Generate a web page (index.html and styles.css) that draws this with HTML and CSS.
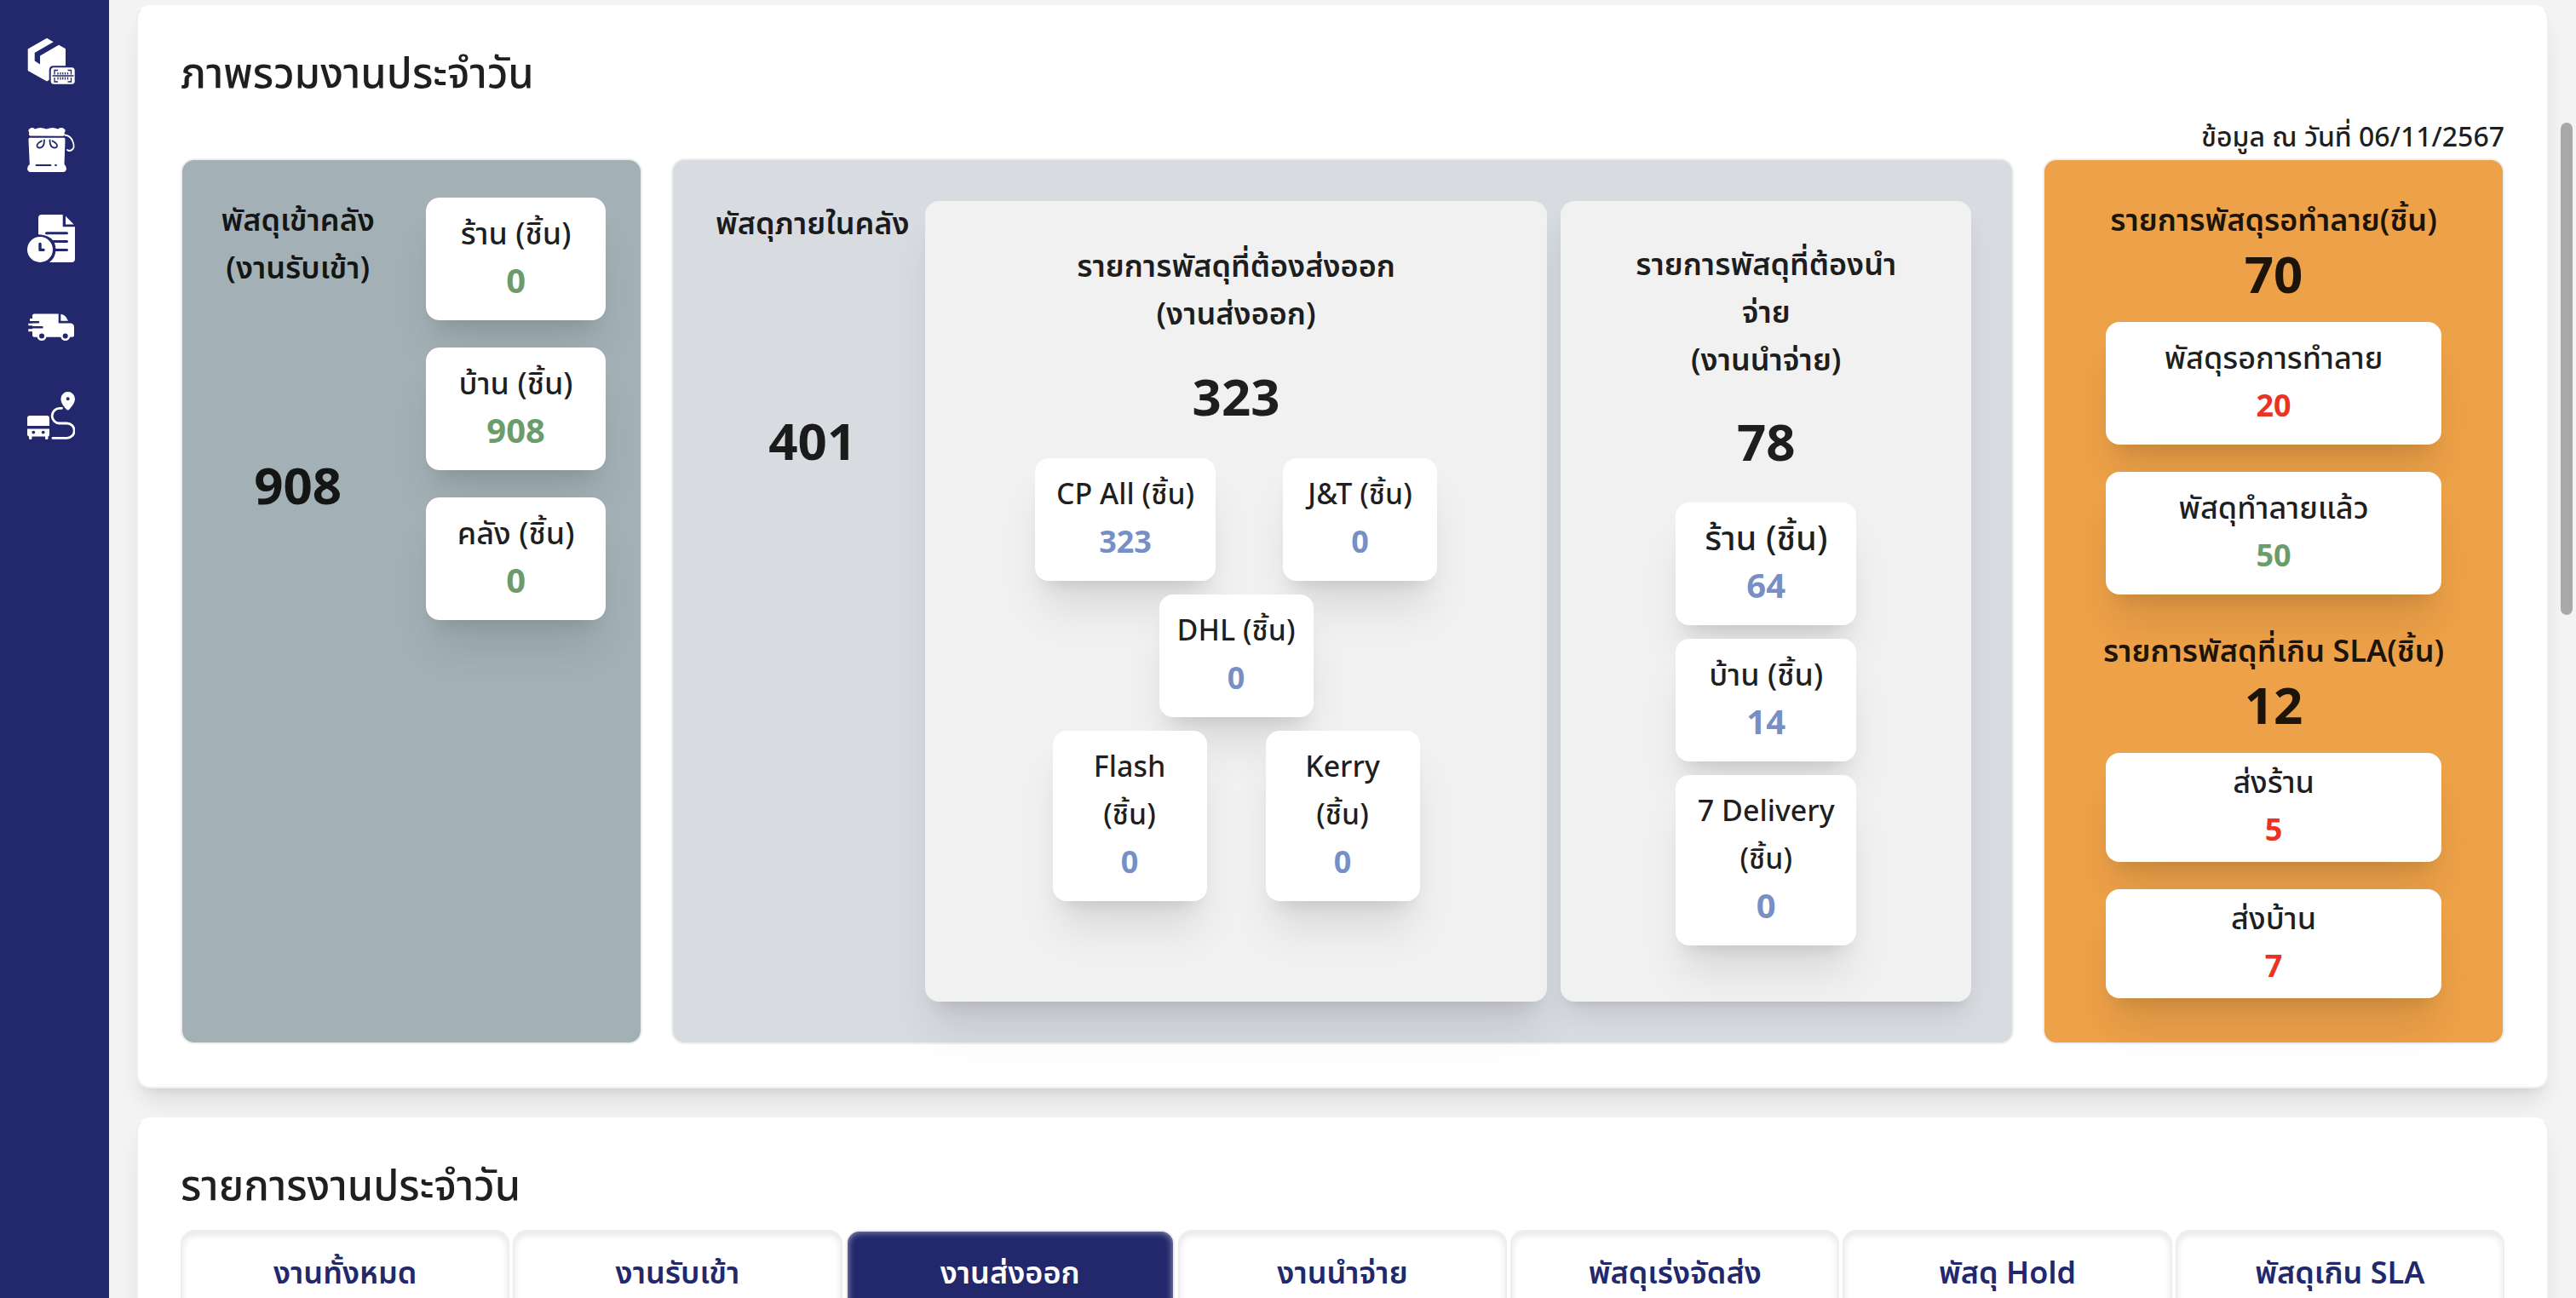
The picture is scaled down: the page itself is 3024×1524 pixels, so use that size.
FILE: index.html
```html
<!DOCTYPE html>
<html lang="th">
<head>
<meta charset="utf-8">
<title>ภาพรวมงานประจำวัน</title>
<link rel="stylesheet" href="styles.css">
</head>
<body>
<div class="app">
  <nav class="sidebar" aria-label="เมนูหลัก">
    <a href="#parcel" class="nav-link" aria-label="พัสดุ">
      <svg viewBox="0 0 56 56" class="nav-icon">
        <path fill="#fff" d="M23 .8 30.700 5.200 8.700 18V27.600L15 31.400V21.400L37 8.700 45 13.200V33.200H31Q25.700 33.200 25.700 38.500V50L23 51.400.700 39V13.500Z"/>
        <rect x="27.700" y="35.200" width="28" height="19.600" rx="3.500" fill="#fff"/>
        <path fill="none" stroke="#22286b" stroke-width="1.300" d="M36 38.500h-4v5M47.500 38.500h4v5M36 52h-4v-5M47.500 52h4v-5M29.500 45h25M36 41v2.500M39 41v2.500M41.700 41v2.500M44.500 41v2.500M47.500 41v2.500M36 46.500v3M39 46.500v3M41.700 46.500v3M44.500 46.500v3M47.500 46.500v3"/>
      </svg>
    </a>
    <a href="#bag" class="nav-link" aria-label="ถุงพัสดุ">
      <svg viewBox="0 0 56 56" class="nav-icon">
        <path fill="#fff" d="M3 11.500Q1 9.500 2.500 8 0 5 3 3 6 1 9 3.500 15 .5 22.500 3.500 30 .5 36 3.500 40 1 43 3 46 5 43.500 8 44.500 10 42.500 11.800Z"/>
        <path fill="#fff" d="M2.500 13.800H43.500Q45 14.500 44.500 17L43.500 45Q46 47 46 50 45.500 54 42 54H4Q.500 54 0 50 0 47 2.800 45L1.500 17Q1 14.500 2.500 13.800Z"/>
        <path fill="none" stroke="#fff" stroke-width="1.800" stroke-linecap="round" d="M44 10.500Q50 11 53 17 56 24 53.500 27 50 30.500 47 28"/>
        <path fill="none" stroke="#22286b" stroke-width="1.800" stroke-linecap="round" d="M20 16.500Q20 25 15 25.500 11 25.500 11.500 22.500 12 20 17 17.500M26.500 16.500Q26.500 25 31.500 25.500 35.500 25.500 35 22.500 34.500 20 29.500 17.500M10.500 46H27.500M33 46h1"/>
      </svg>
    </a>
    <a href="#history" class="nav-link" aria-label="ประวัติงาน">
      <svg viewBox="0 0 56 56" class="nav-icon">
        <path fill="#fff" d="M17 0H41.700V14.200H56V52Q56 56 52 56H26Q33 51 33.500 41 33 24 13 23.200V4Q13 0 17 0Z"/>
        <path fill="#fff" d="M45 1.800 54.700 11.400H45Z"/>
        <path stroke="#22286b" stroke-width="3" stroke-linecap="round" d="M22.500 21.800H46.500M29 31.600H46.500M33 41.400H46.500"/>
        <circle cx="15" cy="41" r="15" fill="#fff"/>
        <path fill="none" stroke="#22286b" stroke-width="3.400" stroke-linecap="round" stroke-linejoin="round" d="M15 34.500V41.400H19"/>
      </svg>
    </a>
    <a href="#delivery" class="nav-link" aria-label="งานจัดส่ง">
      <svg viewBox="0 0 56 56" class="nav-icon">
        <path fill="#fff" d="M8 12.400H36.700V23.500H51Q55 24 55 28V38.300Q54.500 39.700 53 39.700H8Q6 39.700 6 37.500V33.300H1.300V30.200H6V26.300H1.300V23.500H6V21H3V18H6V14Q6.500 12.400 8 12.400Z"/>
        <path fill="#fff" d="M39.300 12.800Q45 13.500 48 20.700H39.300Z"/>
        <path stroke="#22286b" stroke-width="2.400" stroke-linecap="round" d="M1 22.300H13M5 28.300H17.500"/>
        <circle cx="17" cy="38.600" r="5.500" fill="#fff"/><circle cx="44.700" cy="38.600" r="5.500" fill="#fff"/>
        <circle cx="17" cy="38.600" r="3" fill="#22286b"/><circle cx="44.700" cy="38.600" r="3" fill="#22286b"/>
      </svg>
    </a>
    <a href="#route" class="nav-link" aria-label="เส้นทางขนส่ง">
      <svg viewBox="0 0 56 56" class="nav-icon">
        <path fill="#fff" d="M3 28H23Q26 28 26 31V40H0V31Q0 28 3 28ZM0 43.500H26V50Q26 52.400 24.500 52.400V54.500Q24.500 56 22.800 56 21 56 21 54.500V52.600H5.500V54.500Q5.500 56 3.700 56 2 56 2 54.500V52.400Q0 52.400 0 50Z"/>
        <circle cx="7.300" cy="47.600" r="1.900" fill="#22286b"/><circle cx="18.700" cy="47.600" r="1.900" fill="#22286b"/>
        <path fill="#fff" fill-rule="evenodd" d="M47.700 0A8.300 8.300 0 0 1 56 8.300C56 13 52 18 49 21Q47.700 22 46.400 21C43 18 39.400 13 39.400 8.300A8.300 8.300 0 0 1 47.700 0ZM47.700 6.300a2 2 0 1 0 .01 0Z"/>
        <path fill="none" stroke="#fff" stroke-width="2.800" stroke-linecap="round" d="M40.500 19.300H38A8.800 8.800 0 0 0 38 37H46.500A8.600 8.600 0 0 1 46.500 54.400H30"/>
      </svg>
    </a>
  </nav>

  <main class="main">
    <section class="card">
      <h1 class="card-title">ภาพรวมงานประจำวัน</h1>
      <p class="date">ข้อมูล ณ วันที่ 06/11/2567</p>
      <div class="overview">
        <section class="panel inbound">
          <div class="summary">
            <h2 class="heading">พัสดุเข้าคลัง<br>(งานรับเข้า)</h2>
            <p class="total">908</p>
          </div>
          <div class="stack">
            <div class="stat"><p>ร้าน (ชิ้น)</p><strong class="green large">0</strong></div>
            <div class="stat"><p>บ้าน (ชิ้น)</p><strong class="green large">908</strong></div>
            <div class="stat"><p>คลัง (ชิ้น)</p><strong class="green large">0</strong></div>
          </div>
        </section>

        <section class="panel warehouse">
          <div class="summary">
            <h2 class="heading">พัสดุภายในคลัง</h2>
            <p class="total">401</p>
          </div>
          <section class="group outbound">
            <h3 class="heading">รายการพัสดุที่ต้องส่งออก<br>(งานส่งออก)</h3>
            <p class="total">323</p>
            <div class="carriers">
              <div class="carrier-row wide">
                <div class="stat"><p class="brand">CP All (ชิ้น)</p><strong class="blue">323</strong></div>
                <div class="stat narrow"><p class="brand">J&amp;T (ชิ้น)</p><strong class="blue">0</strong></div>
              </div>
              <div class="carrier-row">
                <div class="stat narrow"><p class="brand">DHL (ชิ้น)</p><strong class="blue">0</strong></div>
              </div>
              <div class="carrier-row">
                <div class="stat narrow"><p class="brand">Flash<br>(ชิ้น)</p><strong class="blue">0</strong></div>
                <div class="stat narrow"><p class="brand">Kerry<br>(ชิ้น)</p><strong class="blue">0</strong></div>
              </div>
            </div>
          </section>
          <section class="group handout">
            <h3 class="heading">รายการพัสดุที่ต้องนำ<br>จ่าย<br>(งานนำจ่าย)</h3>
            <p class="total">78</p>
            <div class="carriers">
              <div class="stat"><p class="large">ร้าน (ชิ้น)</p><strong class="blue large">64</strong></div>
              <div class="stat"><p>บ้าน (ชิ้น)</p><strong class="blue large">14</strong></div>
              <div class="stat"><p class="brand">7 Delivery<br>(ชิ้น)</p><strong class="blue large">0</strong></div>
            </div>
          </section>
        </section>

        <section class="panel alerts">
          <div>
            <h2 class="heading">รายการพัสดุรอทำลาย(ชิ้น)</h2>
            <p class="total">70</p>
            <div class="stack">
              <div class="stat"><p>พัสดุรอการทำลาย</p><strong class="red">20</strong></div>
              <div class="stat"><p>พัสดุทำลายแล้ว</p><strong class="green">50</strong></div>
            </div>
          </div>
          <div>
            <h2 class="heading">รายการพัสดุที่เกิน SLA(ชิ้น)</h2>
            <p class="total">12</p>
            <div class="stack">
              <div class="stat slim"><p>ส่งร้าน</p><strong class="red">5</strong></div>
              <div class="stat slim"><p>ส่งบ้าน</p><strong class="red">7</strong></div>
            </div>
          </div>
        </section>
      </div>
    </section>

    <section class="card">
      <h1 class="card-title">รายการงานประจำวัน</h1>
      <div class="tabs" role="tablist">
        <button class="tab" type="button" role="tab">งานทั้งหมด</button>
        <button class="tab" type="button" role="tab">งานรับเข้า</button>
        <button class="tab active" type="button" role="tab" aria-selected="true">งานส่งออก</button>
        <button class="tab" type="button" role="tab">งานนำจ่าย</button>
        <button class="tab" type="button" role="tab">พัสดุเร่งจัดส่ง</button>
        <button class="tab" type="button" role="tab">พัสดุ Hold</button>
        <button class="tab" type="button" role="tab">พัสดุเกิน SLA</button>
      </div>
    </section>
  </main>
</div>
<div class="scroll-thumb" aria-hidden="true"></div>
</body>
</html>
```
FILE: styles.css
```css
* { box-sizing: border-box; }

body {
  margin: 0;
  height: 100vh;
  overflow: hidden;
  background: #f4f4f4;
  color: rgba(0, 0, 0, 0.88);
  font-family: "Noto Sans Thai", "Noto Sans", sans-serif;
  font-size: 36px;
  line-height: 56px;
}

h1, h2, h3, p { margin: 0; }

.app { display: flex; min-height: 100vh; }

.sidebar {
  position: relative;
  z-index: 1;
  flex: none;
  width: 128px;
  padding: 44px 32px 0;
  display: flex;
  flex-direction: column;
  gap: 48px;
  background: #22286b;
}
.nav-link { display: block; width: 56px; height: 56px; }
.nav-icon { display: block; width: 56px; height: 56px; }

.main {
  flex: 1;
  min-width: 0;
  padding: 6px 32px 0;
  display: flex;
  flex-direction: column;
  gap: 34px;
}

.card {
  padding: 48px 50px 50px;
  background: #fff;
  border: 2px solid #eee;
  border-top-color: #fff;
  border-radius: 16px;
  box-shadow: 0 20px 30px -6px rgba(0, 0, 0, 0.1), 0 8px 12px -8px rgba(0, 0, 0, 0.1);
}
.card-title { font-size: 49px; line-height: 64px; font-weight: 500; }
.date { margin-top: 18px; font-size: 32px; line-height: 48px; font-weight: 500; text-align: right; }

.overview {
  display: grid;
  grid-template-columns: 11fr 32fr 11fr;
  gap: 34px;
}
.panel { min-width: 0; border: 2px solid #eee; border-radius: 16px; }
.heading {
  font-size: 36px;
  line-height: 56px;
  font-weight: 600;
  text-align: center;
  white-space: nowrap;
}
.total {
  padding-top: 4px;
  font-size: 60px;
  line-height: 68px;
  font-weight: 700;
  text-align: center;
}
.summary { display: flex; flex-direction: column; gap: 192px; align-items: center; }
.stack { display: flex; flex-direction: column; gap: 32px; }

.stat {
  padding: 16px 8px;
  border-radius: 16px;
  background: #fff;
  text-align: center;
  white-space: nowrap;
  box-shadow: 0 40px 50px -10px rgba(0, 0, 0, 0.1), 0 16px 20px -12px rgba(0, 0, 0, 0.1);
}
.stat p { font-weight: 500; }
.stat strong { display: block; font-weight: 700; }
.stat .large { font-size: 40px; }
.stat .brand { font-size: 34px; }
.slim { padding: 8px; }
.green { color: #6a9c6c; }
.blue { color: #768fc5; }
.red { color: #ea3323; }

.inbound {
  display: grid;
  grid-template-columns: 9fr 10fr;
  gap: 56px;
  padding: 44px 41px;
  background: #a3b1b6;
}
.inbound > * { min-width: 0; }

.warehouse {
  display: grid;
  grid-template-columns: 232fr 731fr 482fr;
  gap: 16px;
  padding: 48px;
  background: #d8dbe0;
}
.warehouse > * { min-width: 0; }
.group {
  display: flex;
  flex-direction: column;
  align-items: center;
  border-radius: 16px;
  background: #f1f1f1;
}
.outbound {
  gap: 34px;
  padding: 50px 16px 48px;
  box-shadow: 0 40px 50px -10px rgba(0, 0, 0, 0.1), 0 16px 20px -12px rgba(0, 0, 0, 0.1);
}
.handout {
  gap: 33px;
  padding: 48px 16px 66px;
  box-shadow: 0 20px 30px -6px rgba(0, 0, 0, 0.1), 0 8px 12px -8px rgba(0, 0, 0, 0.1);
}
.carriers { display: flex; flex-direction: column; gap: 16px; }
.carrier-row { display: flex; justify-content: center; gap: 69px; }
.carrier-row.wide { gap: 79px; }
.group .stat { width: 212px; }
.group .narrow { width: 181px; }

.alerts {
  display: flex;
  flex-direction: column;
  gap: 40px;
  padding: 44px 72px;
  background: #eda148;
}
.alerts .heading { display: flex; justify-content: center; }
.alerts .stack { margin-top: 18px; }

.tabs { display: grid; grid-template-columns: repeat(7, 1fr); gap: 4px; margin-top: 18px; }
.tab {
  height: 104px;
  padding: 0;
  border: 2px solid #eee;
  border-radius: 16px;
  background: #fff;
  color: #22286b;
  font: inherit;
  font-weight: 600;
  font-size: 36px;
  box-shadow: inset 0 4px 8px rgba(0, 0, 0, 0.1);
}
.tab.active { background: #22286b; color: #fff; box-shadow: inset 0 0 8px rgba(255, 255, 255, 0.6); }

.scroll-thumb {
  position: fixed;
  z-index: 2;
  top: 144px;
  right: 4px;
  width: 14px;
  height: 578px;
  border-radius: 7px;
  background: #a8a8a8;
}
```
